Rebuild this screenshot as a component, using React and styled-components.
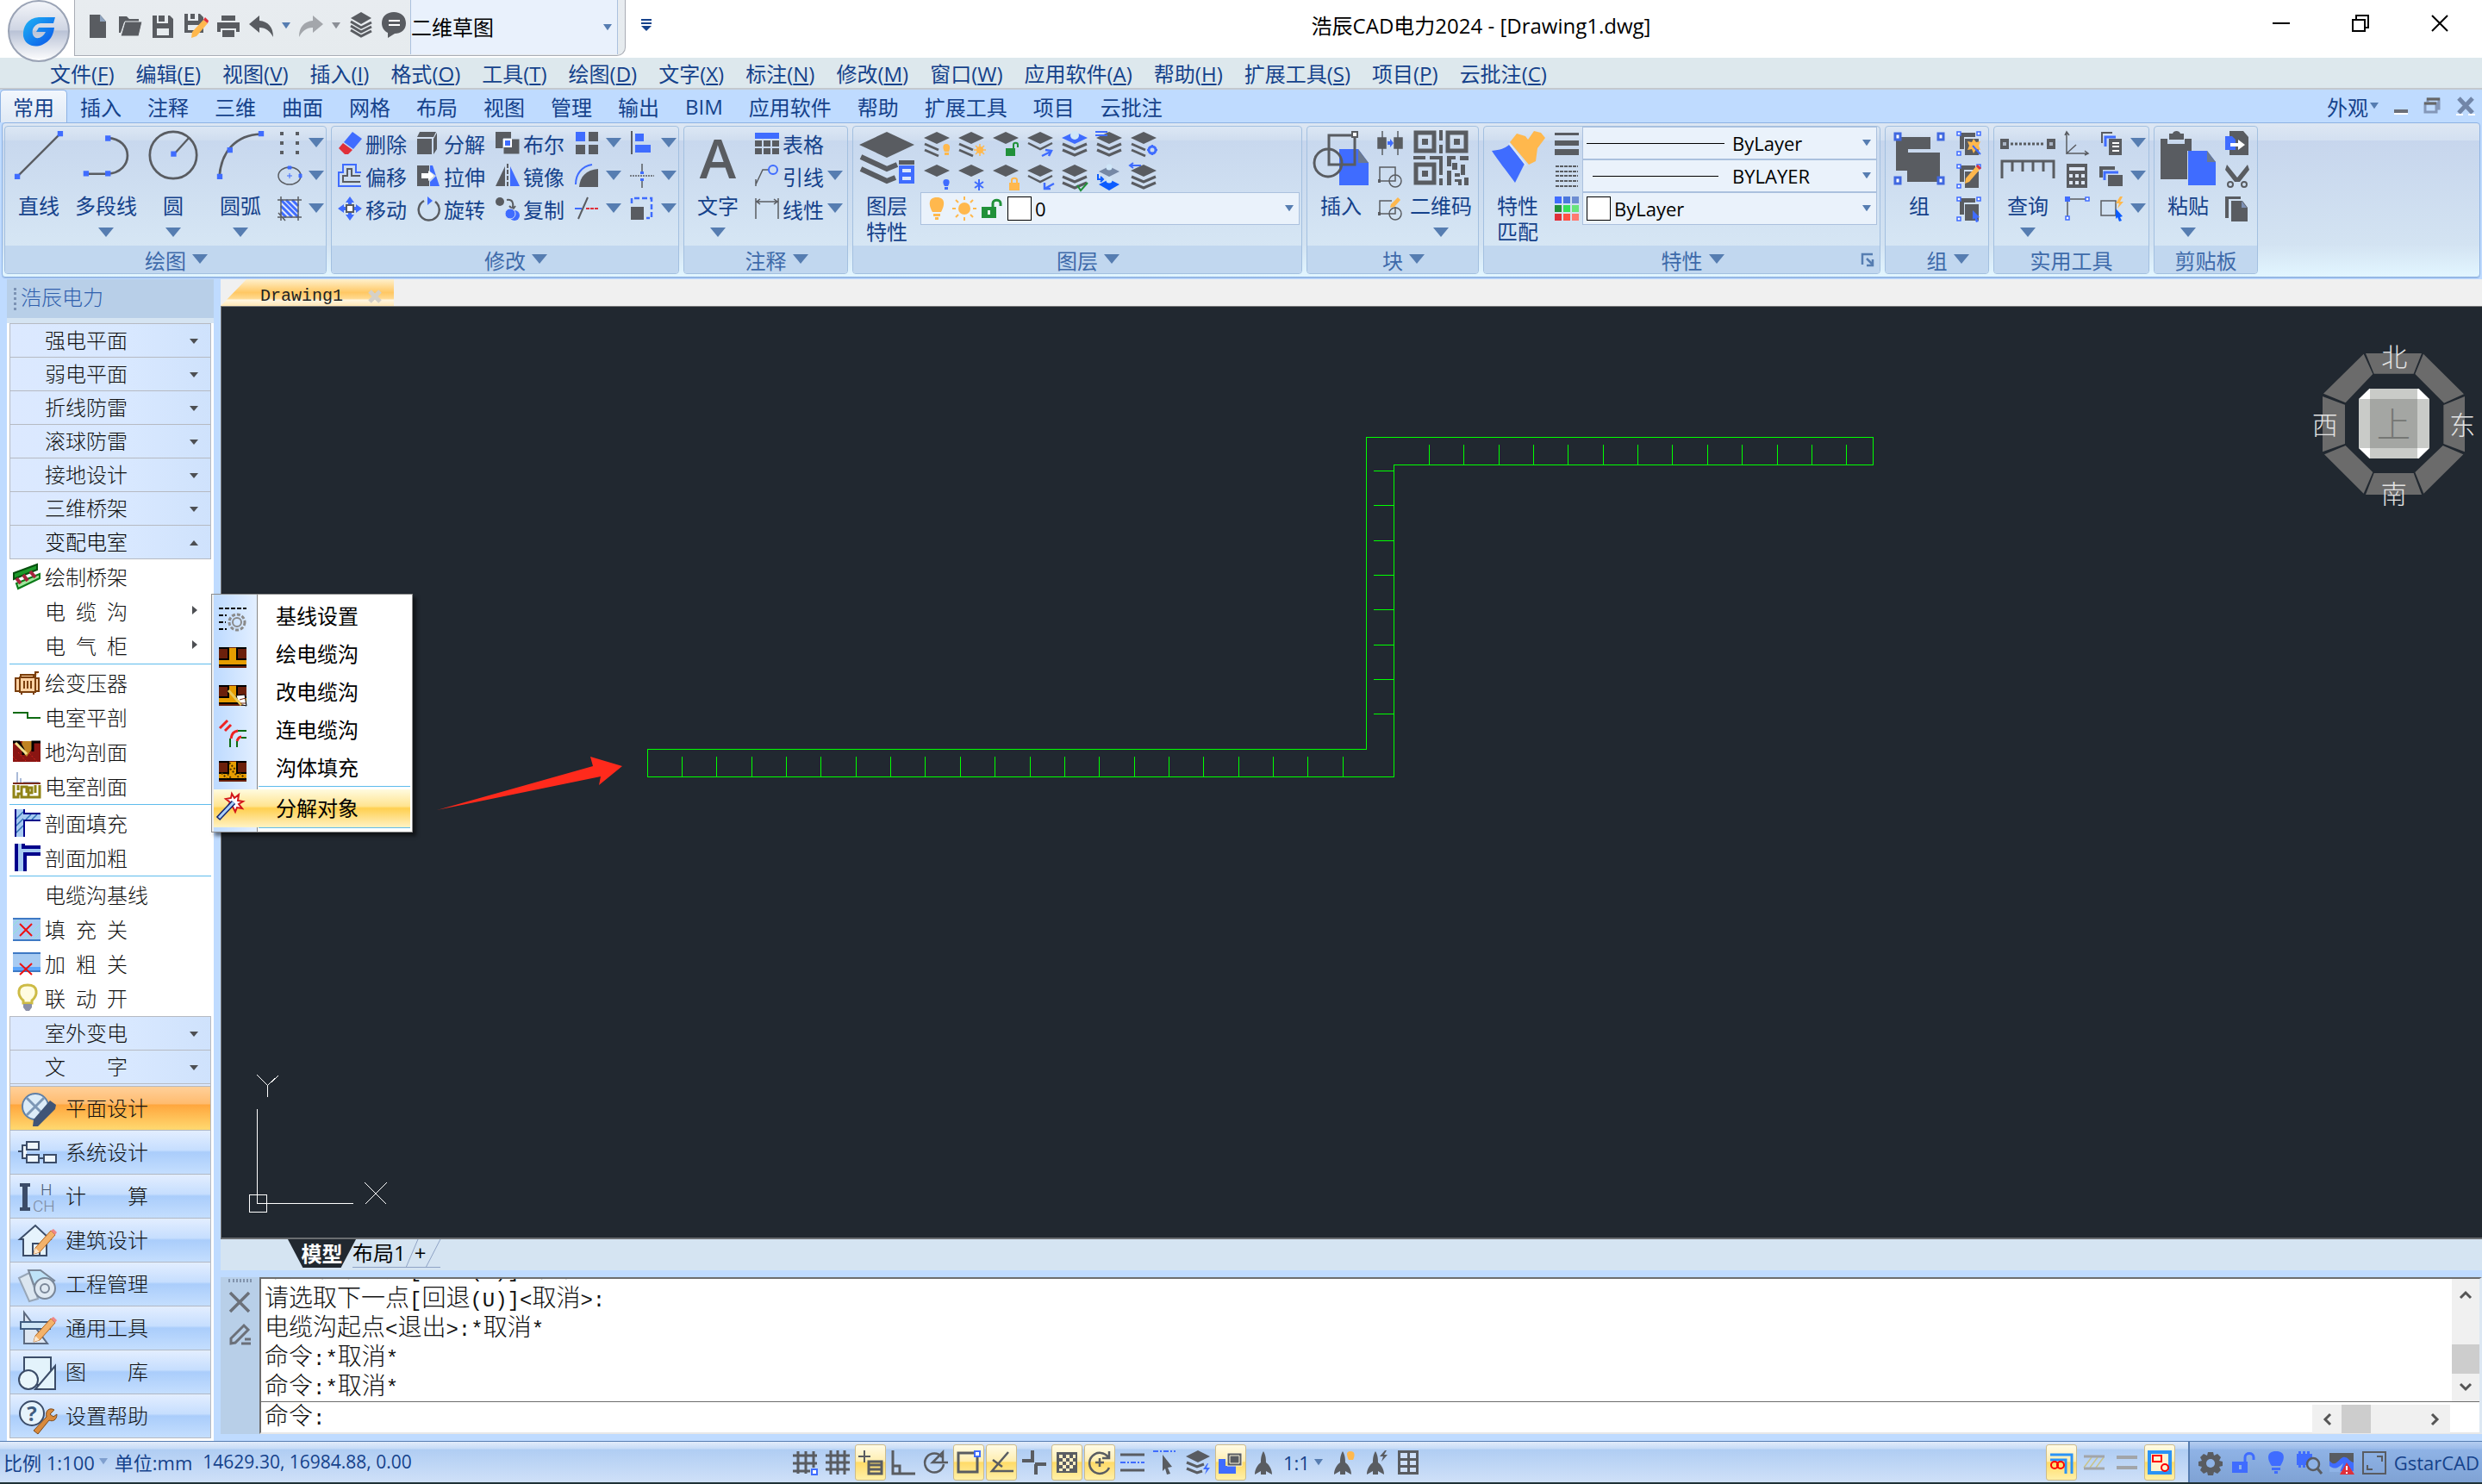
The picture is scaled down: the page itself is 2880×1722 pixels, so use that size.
import React, { useState } from 'react'
import styled, { createGlobalStyle, css } from 'styled-components'

const G = '#595c61'
const B = '#3f6cff'
const O = '#ffb84d'
const R = '#e0303a'
const GR = '#21913a'
const UI = '"Open Sans", "Noto Sans CJK SC", sans-serif'
const SONG = '"Liberation Mono", "Noto Sans CJK SC", monospace'

const GlobalStyle = createGlobalStyle`
  * { box-sizing: border-box; }
  body { margin: 0; background: #bfdbff; font-family: ${UI}; font-size: 24px; color: #15428b; }
  button, select, input { font: inherit; color: inherit; border: 0; background: none; padding: 0; margin: 0; }
  a { color: inherit; text-decoration: none; }
  svg { display: block; flex: none; overflow: visible; }
`

/* ---------- icons ---------- */

const stack = (color = G) => (
  <>
    <path d="M16 1 31 8 16 15 1 8Z" fill={color} />
    <path d="M2 15 16 21 30 15M2 22 16 28 30 22" fill="none" stroke={G} strokeWidth="3" />
  </>
)
const halfStack = (
  <>
    <path d="M16 1 31 8 16 15 1 8Z" fill={G} />
    <path d="M2 15 18 22M2 22 18 29" fill="none" stroke={G} strokeWidth="3" />
  </>
)
const diamond = <path d="M16 1 31 8 16 15 1 8Z" fill={G} />
const squares = (
  <>
    <path d="M4 2h18v5H9v14H4zM10 9h16v19H10z" fill={G} />
    <path d="M1 1h4v4H1zM24 1h4v4h-4zM1 24h4v4H1z" fill="#fff" stroke={B} strokeWidth="1.5" />
  </>
)
const trench = (
  <>
    <path d="M0 4h32v24H0z" fill="#6b200b" />
    <path d="M11 5h10v13h11v6H0v-6h11z" fill="#e69d00" />
    <path d="M0 5h11v13H0M32 5H21v13h11M0 25h32" fill="none" stroke="#000" strokeWidth="2" />
  </>
)
const pencil = (
  <>
    <path d="M11 17 23 3l4 4-12 14-5 2z" fill={O} />
    <path d="m23 3 2-2 4 4-2 2z" fill={R} />
  </>
)
const navPencil = (
  <>
    <path d="M20 28 38 8l5 5-18 20-7 2z" fill="#f3b26a" stroke="#b5651d" strokeWidth="1" />
    <path d="m38 8 3-2 4 4-2 3z" fill="#e88" />
    <path d="m18 35 2-7 5 5z" fill="#fbe6cc" />
  </>
)
const scaleFig = <path d="M14 1c3 5 3 10 3 13 4 3 7 8 7 14l-7-4v4h-6v-4l-7 4c0-6 3-11 7-14 0-3 0-8 3-13z" fill={G} />

const icons = {
  /* quick access */
  newFile: <><path d="M5 1h12l7 8v19H5z" fill={G} /><path d="M17 1v8h7z" fill="#8fa3bd" /></>,
  open: <><path d="M1 3h9l3 3h11v4H7L3 22H1z" fill={G} /><path d="M8 9h20l-4 17H3z" fill={G} stroke="#e8ecf0" /></>,
  save: <path d="M2 2h5v9h13V2h2l4 4v22H2zM9 2h7v7H9zM7 17v8h14v-8z" fillRule="evenodd" fill={G} />,
  saveAs: <><path d="M1 0h4v8h12V0h2l4 4v18H1zM8 0h5v6H8zM5 13v6h14v-6z" fillRule="evenodd" fill={G} /><path d="M10 21 23 7l5 4-13 15-6 2z" fill={O} /><path d="m23 7 2-3 4 4-1 3z" fill={R} /></>,
  print: <path d="M6 2h16v6H6zM1 10h26v11h-4v-4H5v4H1zM7 19h14v8H7z" fill={G} />,
  undo: <path d="M12 2 0 12l12 10v-6c8 0 12 4 16 11 0-12-6-18-16-19z" fill={G} />,
  redo: <path d="m16 2 12 10-12 10v-6C8 16 4 20 0 27 0 15 6 9 16 8z" fill="#a3a6ab" />,
  comment: <><path d="M14 0c8 0 14 5 14 13s-6 12-13 12L7 30v-6C3 22 0 18 0 13 0 5 6 0 14 0z" fill={G} /><path d="M8 10h13M8 15h13" stroke="#fff" strokeWidth="2" /></>,
  books: <><path d="M14 0 26 7 14 14 2 7z" fill={G} /><path d="m2 11 12 7 12-6M2 16l12 7 12-6M2 21l12 7 12-6" stroke={G} strokeWidth="3" fill="none" /></>,
  /* draw */
  line: <><path d="M4 60 60 4" stroke={G} strokeWidth="2.5" /><path d="M1 56h7v7H1zM56 1h7v7h-7z" fill={B} /></>,
  polyline: <><path d="M6 56h28c34-2 34-45 0-46" fill="none" stroke={G} strokeWidth="3" /><path d="M3 52h7v7H3zM31 52h7v7h-7zM31 7h7v7h-7z" fill={B} /></>,
  circle: <><circle cx="32" cy="32" r="30" fill="none" stroke={G} strokeWidth="3" /><path d="M32 32 52 10" stroke={G} strokeWidth="2.5" /><path d="M29 27h7v7h-7z" fill={B} /></>,
  arc: <><path d="M5 60C7 28 26 6 58 5" fill="none" stroke={G} strokeWidth="3" /><path d="M2 56h7v7H2zM15 22h7v7h-7zM55 1h7v7h-7z" fill={B} /></>,
  points: <path d="M3 1h4v4H3zM21 1h4v4h-4zM3 12h4v4H3zM21 12h4v4h-4zM3 23h4v4H3zM21 23h4v4h-4z" fill={G} />,
  ellipse: <><ellipse cx="14" cy="14" rx="13" ry="10" fill="none" stroke={G} strokeWidth="1.5" /><path d="M12 3h4v3h-4zM25 12h3v4h-3zM11 14h6M14 11v6" fill={B} stroke={B} /></>,
  hatch: <><path d="M4 4h20v20H4z" fill="#dfe8fb" /><path d="m4 4 20 20M10 4l14 14M17 4l7 7M4 11l13 13M4 18l6 6" stroke={B} strokeWidth="3" /><path d="M0 4h28M4 0v28M0 24h28M24 0v28M1 19l8 9" stroke={G} strokeWidth="1.5" fill="none" /></>,
  /* modify */
  erase: <><path d="M17 1 28 9 18 21 7 13z" fill={B} /><path d="m6 14 11 8-5 5H8l-7-7z" fill={R} /></>,
  offset: <><path d="M27 26H1V10h5V1h15v9h6" fill="none" stroke={B} strokeWidth="2" /><path d="M26 21H6v-7h5V6h5v8h10" fill="none" stroke={G} strokeWidth="2" /></>,
  move: <><path d="m14 0 5 7h-3v5h5V9l7 5-7 5v-3h-5v5h3l-5 7-5-7h3v-5H7v3l-7-5 7-5v3h5V7H9z" fill={B} /><path d="M10 10h8v8h-8z" fill="#fff" stroke={G} strokeWidth="2" /></>,
  explode: <path d="M1 9h17v18H1zM4 1h19l-3 6H1zM20 9l4-7v19l-4 6z" fill={G} />,
  stretch: <><path d="M1 2h14v8l6 4-6 5v7H1z" fill={G} /><path d="M16 2h3l8 24H16v-5l7-7-7-5z" fill={B} /><path d="M6 11h8V8l7 6-7 6v-3H6z" fill="#fff" /></>,
  rotate: <><path d="M9 5A12 12 0 1 0 22 6" fill="none" stroke={G} strokeWidth="2.5" /><path d="m13 0 6 5-6 5z" fill={B} /></>,
  boolean: <><path d="M0 1h18v19H0z" fill={G} /><path d="M9 9h19v18H9z" fill={G} stroke="#cddcf0" /><path d="M10 10h8v8h-8z" fill={B} stroke="#fff" strokeWidth="2" /></>,
  mirror: <><path d="M11 3v23H0z" fill={G} /><path d="M14 0v28" stroke={G} strokeWidth="2" strokeDasharray="5 2" /><path d="M17 3v23h11z" fill={B} /></>,
  copy: <><circle cx="5" cy="6" r="5" fill={G} /><path d="M13 4c7-1 8 4 7 9M16 11l4 4 3-4" fill="none" stroke={G} strokeWidth="2" /><circle cx="22" cy="22" r="6" fill={B} /><circle cx="17" cy="20" r="6" fill={B} stroke="#d4e0f3" /></>,
  array: <><path d="M1 1h11v11H1z" fill={B} /><path d="M16 1h11v11H16zM1 16h11v11H1zM16 16h11v11H16z" fill={G} /></>,
  fillet: <><path d="M1 24C1 12 8 3 20 1" fill="none" stroke={B} strokeWidth="2" /><path d="M5 27C6 15 13 7 27 6v21z" fill={G} /></>,
  trim: <><path d="M0 14h8" stroke={B} strokeWidth="2" /><path d="M4 26 15 1" stroke={G} strokeWidth="2" /><path d="M13 14h15" stroke={R} strokeWidth="2" strokeDasharray="4 1" /></>,
  align: <><path d="M2 0v27" stroke={G} strokeWidth="2" /><path d="M6 3h10v9H6zM6 16h18v9H6z" fill={B} /></>,
  breakAt: <><path d="M14 0v10M14 18v10" stroke={G} strokeWidth="1.5" /><path d="M0 14h28" stroke={G} strokeWidth="1.5" strokeDasharray="2 1" /><path d="M12 9h4v3h-4zM12 17h4v3h-4z" fill={B} /></>,
  scale: <><path d="M1 12h15v15H1z" fill={G} /><path d="M2 8V2h23v23h-6" fill="none" stroke={B} strokeWidth="2.5" strokeDasharray="6 3" /></>,
  /* annotate */
  letter: <text x="32" y="56" textAnchor="middle" fontFamily="Open Sans" fontWeight="600" fontSize="64" fill={G}>A</text>,
  table: <><path d="M0 2h28v7H0z" fill={B} /><path d="M0 11h8v7H0zM10 11h8v7h-8zM20 11h8v7h-8zM0 20h8v7H0zM10 20h8v7h-8zM20 20h8v7h-8z" fill={G} /></>,
  leader: <><path d="m1 24 8-17h6M1 18v8" fill="none" stroke={G} strokeWidth="1.5" /><circle cx="21" cy="7" r="5" fill="none" stroke={B} strokeWidth="2" /></>,
  linear: <path d="M1 2v24M27 2v24M2 6h24M6 3 2 6l4 3M22 3l4 3-4 3" fill="none" stroke={G} strokeWidth="1.5" />,
  /* layers */
  layerBig: <><path d="M32 2 64 17 32 32 0 17z" fill={G} /><path d="M2 31 32 45 44 40M2 45 32 59 42 55" fill="none" stroke={G} strokeWidth="6" /><path d="M46 35h18v5H46z" fill={G} /><path d="M46 41h18v21H46z" fill={B} /><path d="M50 45h10v4H50zM50 54h10v4H50z" fill="#dce7fa" /></>,
  layBulb: <>{halfStack}<path d="M27 15c6 0 4 7 3 9h-5c-2-3-3-9 2-9zM25 25h5v3h-5z" fill={O} /></>,
  laySun: <>{halfStack}<circle cx="26" cy="22" r="4" fill={O} /><path d="M26 15v14M19 22h14M21 17l10 10M31 17 21 27" stroke={O} strokeWidth="1.5" /></>,
  layUnlock: <>{diamond}<path d="M16 20h11v9H16z" fill={GR} /><path d="M25 20v-4c0-3 5-3 5 0v3" fill="none" stroke={GR} strokeWidth="2" /></>,
  layNext: <><path d="M16 1 31 8 16 15 1 8Z" fill={G} /><path d="m2 14 14 7 14-7" fill="none" stroke={G} strokeWidth="2.5" /><path d="m18 29 10-5M22 22l7 1-3 6" fill="none" stroke={B} strokeWidth="2.5" /></>,
  layTop: <>{stack(B)}<circle cx="16" cy="5" r="5" fill="#cfe6f8" /></>,
  layList: <>{stack()}<path d="M0 1h14M0 5h14" stroke={B} strokeWidth="2" /></>,
  layGear: <>{halfStack}<circle cx="26" cy="22" r="4" fill="none" stroke={B} strokeWidth="3" /><path d="M26 16v3M26 25v3M20 22h3M29 22h3" stroke={B} strokeWidth="2" /></>,
  layOff: <>{diamond}<path d="M27 18c5 0 4 5 2 8h-4c-2-3-3-8 2-8zM25 27h4v3h-4z" fill={B} /></>,
  layFreeze: <>{diamond}<path d="M25 18v13M20 21l10 7M30 21l-10 7" stroke={B} strokeWidth="2" /></>,
  layLock: <>{diamond}<path d="M20 22h12v9H20z" fill={O} /><path d="M23 22v-3c0-3 6-3 6 0v3" fill="none" stroke={O} strokeWidth="2" /></>,
  layPrev: <><path d="M16 1 31 8 16 15 1 8Z" fill={G} /><path d="m2 14 14 7 14-7" fill="none" stroke={G} strokeWidth="2.5" /><path d="m32 23-11 6M21 22v7h7" fill="none" stroke={B} strokeWidth="2.5" /></>,
  layMatch: <>{stack()}<path d="m19 25 4 6 8-9" fill="none" stroke={GR} strokeWidth="2" /></>,
  layWalk: <><path d="m16 3 12 6-12 6L4 9z" fill="#7688a5" /><circle cx="16" cy="4" r="3.5" fill="#cfe6f8" /><path d="m16 18 12 6-12 7-12-7z" fill="#0c5cff" /><circle cx="16" cy="19" r="3.5" fill="#cfe6f8" /><path d="M3 12v6h6M6 15l3 3-3 3" fill="none" stroke="#0c5cff" strokeWidth="2" /></>,
  layBack: <>{stack()}<path d="M0 2h13M4-1 0 2l4 3" stroke={B} strokeWidth="2" fill="none" /></>,
  bulb: <path d="M14 1c11 0 9 10 5 17H9C5 11 3 1 14 1zM10 20h8v3h-8zM12 24h4v3h-4z" fill={O} />,
  sun: <><circle cx="14" cy="14" r="7" fill={O} /><path d="M14 0v4M14 24v4M0 14h4M24 14h4M4 4l3 3M21 21l3 3M24 4l-3 3M7 21l-3 3" stroke={O} strokeWidth="2" /></>,
  unlock: <><path d="M2 12h17v13H2z" fill={GR} /><path d="M15 12V8c0-5 9-5 9 0v3" fill="none" stroke={GR} strokeWidth="3" /><path d="M9 16h3v5H9z" fill="#eef5fb" /></>,
  /* block */
  insertBlock: <><path d="M30 22h22l12 16v26H30z" fill={B} /><path d="M52 22v16h12z" fill="#6c7a90" /><path d="M18 6h30v34H18z" fill="none" stroke={G} strokeWidth="3" /><circle cx="17" cy="38" r="16" fill="none" stroke={G} strokeWidth="3" /><path d="M45 2h6v6h-6z" fill="#fff" stroke={G} strokeWidth="2" /></>,
  attach: <><path d="M0 8h9v12H0zM19 8h9v12h-9zM5 0v28M23 0v28" fill={G} stroke={G} strokeWidth="1.5" /><path d="M11 12h3V9l4 5-4 5v-3h-3z" fill={B} /></>,
  block: <><path d="M2 4h18v16H2z" fill="none" stroke={G} strokeWidth="1.5" /><circle cx="20" cy="20" r="7" fill="none" stroke={G} strokeWidth="1.5" /><path d="M0 18h3v4H0z" fill={G} /></>,
  blockEdit: <><path d="M20 12v8H2V5h14" fill="none" stroke={G} strokeWidth="1.5" /><circle cx="20" cy="20" r="7" fill="none" stroke={G} strokeWidth="1.5" /><path d="M0 18h3v4H0z" fill={G} /><path d="m15 9 8-8 3 3-7 8-5 1z" fill={O} /></>,
  qr: <><path d="M3 3h21v21H3zM40 3h21v21H40zM3 40h21v21H3z" fill="none" stroke={G} strokeWidth="5" /><path d="M10 10h7v7h-7zM47 10h7v7h-7zM10 47h7v7h-7zM30 0h4v12h-4zM30 17h4v10h-4zM0 30h14v4H0zM19 30h15v22h-4V34H19zM30 56h4v8h-4zM39 30h10v4h-5v8h-5zM54 30h10v5H54zM45 38h6v8h-6zM55 40h5v12h-5zM39 47h5v17h-5zM48 50h6v4h-6zM48 57h8v7h-4v-4h-4zM59 55h5v9h-5z" fill={G} /></>,
  /* properties */
  matchBig: <><path d="M2 24c10-1 15-3 20-7l18 22-11 22C18 46 10 36 2 24z" fill={B} /><path d="m23 14 8-10 10 3 3 4 7-10 8 2 5 6-9 12-2 15-8 4z" fill={O} /><path d="m22 15 20 26" stroke="#dce7f7" strokeWidth="2" /></>,
  lineWeight: <path d="M0 2h28v3H0zM0 11h28v6H0zM0 21h28v7H0z" fill={G} />,
  lineType: <path d="M1 3h26M1 9h26M1 14h26M1 20h26M1 26h26" stroke={G} strokeWidth="2" strokeDasharray="4 1" />,
  palette: <><path d="M0 0h8v8H0z" fill={B} /><path d="M10 0h8v8h-8z" fill="#4a77dd" /><path d="M20 0h8v8h-8z" fill="#6d8dd2" /><path d="M0 10h8v8H0z" fill={GR} /><path d="M10 10h8v8h-8z" fill="#35e05a" /><path d="M20 10h8v8h-8z" fill="#68e47c" /><path d="M0 20h8v8H0z" fill={R} /><path d="M10 20h8v8h-8z" fill="#ff5144" /><path d="M20 20h8v8h-8z" fill="#ff7a70" /></>,
  launcher: <path d="M2 14V2h12M7 7l7 7M14 8v7H7" fill="none" stroke="#567db1" strokeWidth="2.5" />,
  /* group */
  groupBig: <><path d="M5 8h40v14H19v25H5zM18 26h38v34H18z" fill={G} /><path d="M4 4h6v7H4zM54 4h6v7h-6zM4 55h6v7H4zM54 55h6v7h-6z" fill="#fff" stroke="#4068e0" strokeWidth="3" /></>,
  ungroup: <>{squares}<path d="m20 9 3 4 5-1-2 5 2 5-5-1-3 5-2-5-5 1 2-5-2-5 5 1z" fill={O} /><path d="m19 17 9 10" stroke={B} strokeWidth="2" /></>,
  groupEdit: <>{squares}{pencil}</>,
  groupPick: <>{squares}<path d="m19 16 8 8-3 1 2 4-3 1-2-5-2 2z" fill={B} /></>,
  /* utilities */
  measure: <><path d="M0 10h10v12H0zM54 10h10v12H54z" fill={G} /><path d="M3 14h4v4H3zM57 14h4v4h-4z" fill="#aab4c4" /><path d="M12 16h40" stroke={G} strokeWidth="3" strokeDasharray="3 2" /><path d="M2 56V36h60v20M14 36v12M26 36v12M38 36v12M50 36v12" fill="none" stroke={G} strokeWidth="3" /></>,
  axes: <path d="M2 27V2M2 26h24M2 26l11-10M0 5l2-4 3 4M23 23l4 3-4 2" fill="none" stroke={G} strokeWidth="1.5" />,
  calc: <><path d="M2 0h24v28H2z" fill={G} /><path d="M5 4h18v4H5zM5 12h4v4H5zM12 12h4v4h-4zM19 12h4v4h-4zM5 20h4v4H5zM12 20h4v4h-4zM19 20h4v4h-4z" fill="#dfe8f5" /></>,
  dist: <><path d="M2 3h23M3 3v23" stroke={G} strokeWidth="1.5" /><path d="M0 0h6v6H0z" fill={B} /><path d="M24 1h4v4h-4zM1 23h4v4H1z" fill="#fff" stroke={B} strokeWidth="1.5" /></>,
  docs: <><path d="M3 14V2h12" fill="none" stroke={G} strokeWidth="2" /><path d="M7 18V7h12" fill="none" stroke={B} strokeWidth="3" /><path d="M11 9h15v19H11z" fill={G} /><path d="M15 14h8M15 18h8M15 23h8" stroke="#fff" strokeWidth="2" /></>,
  windows: <><path d="M2 16V5h16" fill="none" stroke={G} strokeWidth="4" /><path d="M6 19v-9h16" fill="none" stroke={B} strokeWidth="3" /><path d="M10 13h17v13H10z" fill={G} /></>,
  quickPick: <><path d="M2 5h17v17H2z" fill="none" stroke={G} strokeWidth="1.5" /><path d="m24 0-5 8h4l-2 6 7-8h-4l3-6z" fill={O} /><path d="m19 14 8 9-3 1 2 4-3 1-2-5-2 2z" fill="#0c5cff" /></>,
  /* clipboard */
  pasteBig: <><path d="M0 10h8v6h20v-6h8v14h-5v33H0z" fill={G} /><path d="M10 4h4c1-4 8-4 9 0h4v7H10z" fill={G} /><path d="M32 24h22l10 13v27H32z" fill={B} /><path d="M54 24v13h10z" fill="#6c7a90" /></>,
  docArrow: <><path d="M5 0h16l6 7v21H5z" fill={G} /><path d="M0 6h8l4 4v12H0z" fill={B} /><path d="M6 14h9v-4l8 6-8 6v-4H6z" fill="#fff" /></>,
  cut: <><path d="m2 1 12 15L26 1l2 6-11 14h-6L0 7z" fill={G} /><circle cx="6" cy="24" r="3" fill="none" stroke={G} strokeWidth="2" /><circle cx="22" cy="24" r="3" fill="none" stroke={G} strokeWidth="2" /></>,
  copyDoc: <><path d="M0 0h18v3H4v22H0z" fill={G} /><path d="M7 5h13l6 8v16H7z" fill={G} /><path d="M19 5v8h6z" fill="#7d90b5" /></>,
  /* sidebar */
  tray: <><path d="m1 12 27-10v6L1 19z" fill="#1d9a2a" stroke="#064f0d" strokeWidth="2" /><path d="m4 24 27-11v5L6 30z" fill="#9ee89b" stroke="#0a7a18" strokeWidth="2" /><path d="m4 18 5 6M12 14l5 7M20 10l6 7" stroke="#a4253c" strokeWidth="4" /></>,
  transformer: <><path d="M8 10h18v17H8zM3 11h5v15H3zM26 11h4v15h-4zM9 10V7h15v3M26 10V4h4M10 30v-3M24 30v-3" fill="#ffd3a5" stroke="#7a3f0d" strokeWidth="2" /><path d="M13 14v9M17 14v9M21 14v9" stroke="#7a3f0d" strokeWidth="2" /></>,
  section: <path d="M0 11h17v6h15" fill="none" stroke="#0d6b12" strokeWidth="2" />,
  trenchCut: <><path d="M0 4h32v24H0z" fill="#8a1512" /><path d="M11 4h12l-1 9-6 9-7-8z" fill="#c08322" /><path d="M0 5h7l5 9v6M32 5h-9v11" fill="none" stroke="#000" strokeWidth="3" /><path d="m3 6 13 13" stroke="#f4e190" strokeWidth="3" /><path d="m0 22 6 6M6 17l9 10M19 18l9 10" stroke="#d8251c" strokeWidth="1" strokeDasharray="2" /></>,
  roomCut: <><path d="M5 0v12M9 7v5M12 12h18" stroke="#a9bad8" strokeWidth="2" /><path d="M0 13h32" stroke="#7a2a1a" strokeWidth="2" /><path d="M1 15v14h5v-4h4v4h8V18h4v6h-4v5h13V15M6 15v6M10 24v-7h6v7M26 15v9" fill="none" stroke="#908315" strokeWidth="3" /></>,
  hatchFill: <><path d="M2 0h11v32H2zM13 5h19v8H13z" fill="#a7cbf2" /><path d="M3 12 12 3M3 20l9-9M3 28l9-9M15 12l6-6M22 12l6-6" stroke="#2f72b5" strokeWidth="1.5" /><path d="M3 0v32M13 0v5h19M13 32V13h19" fill="none" stroke="#00008b" strokeWidth="2" /></>,
  bold: <><path d="M6 0h6v32H6zM12 6h20v5H12z" fill="#a7cbf2" /><path d="M4 0v32M12 0v4h20M14 32V12h18" fill="none" stroke="#00008b" strokeWidth="4" /></>,
  fillOff: <><path d="M0 4h32v25H0z" fill="#a7cbf2" /><path d="M0 22 16 6M0 12l7-7M14 28 31 11M24 28l8-8" stroke="#8fe8cf" /><path d="M0 4h32M0 29h32" stroke="#3e79c4" strokeWidth="2" /><path d="m8 10 14 14M22 10 8 24" stroke="#e11" strokeWidth="2" /></>,
  boldOff: <><path d="M0 4h32v16H0z" fill="#a7cbf2" /><path d="M0 20h32v5H0z" fill="#5ba5fb" /><path d="M0 4h32M0 25h32" stroke="#3e79c4" strokeWidth="2" /><path d="m8 16 14 13M22 16 8 29" stroke="#e11" strokeWidth="2" /></>,
  lamp: <><path d="M17 1c13 0 12 12 5 18v3H12v-3C5 13 4 1 17 1z" fill="#fffce0" stroke="#cdbb45" strokeWidth="3" /><path d="M12 23h10v4l-3 4h-4l-3-4z" fill="#8b90a8" /></>,
  /* popup */
  baseline: <><path d="M0 3h32M0 11h9M0 19h8M0 27h9" stroke="#000" strokeWidth="2" strokeDasharray="5 2" /><circle cx="21" cy="19" r="9" fill="none" stroke="#8a8a8a" strokeWidth="3" strokeDasharray="4 2" /><circle cx="21" cy="19" r="5" fill="none" stroke="#8a8a8a" strokeWidth="2" /></>,
  trench,
  trenchEdit: <>{trench}<path d="m20 16 10-1 2 13-9-2z" fill="#fff" stroke="#000" /><path d="m11 10 15 17" stroke="#e8c95a" strokeWidth="3" /><path d="m24 21 7-2M25 25h6" stroke="#6b200b" /></>,
  trenchJoin: <><path d="m1 10 9-9M7 13l7-7M14 22c1-6 3-8 8-9M21 25c1-3 3-5 5-5" fill="none" stroke="#e22" strokeWidth="3" /><path d="M22 13h10M26 21h6M13 22v10M21 25v7" stroke="#0d6b12" strokeWidth="2" /></>,
  trenchFill: <>{trench}<path d="m12 6 8 9M13 13l10 10M3 18l6 6M10 19l4 5M24 18l6 6" stroke="#4d3405" strokeWidth="2" strokeDasharray="2" /></>,
  wand: <><path d="m18 1 3 5 5-4-1 7 6 1-5 3 4 5-6-1-2 5-3-6-6 1 3-6-5-4 6-1z" fill="#fff" stroke="#d3171a" strokeWidth="2" /><path d="M2 30 20 11" stroke="#13236f" strokeWidth="6" /><path d="M3 29 20 11" stroke="#a9d0f8" strokeWidth="3" /></>,
  /* command pane */
  close: <path d="m2 3 22 22M24 3 2 25" stroke="#6b7079" strokeWidth="3.5" />,
  edit: <path d="M3 25v-6L18 4l5 5L8 24zM15 25h11M19 20h7" fill="none" stroke="#6b7079" strokeWidth="3" />,
  /* status bar */
  snap: <><path d="M6 1v26M15 1v26M24 1v19M0 6h28M0 15h28M0 24h20" stroke={G} strokeWidth="3" /><path d="M22 22h6v6h-6z" fill="#fff" stroke={B} strokeWidth="2" /></>,
  grid: <path d="M6 0v28M14 0v28M22 0v28M0 6h28M0 14h28M0 22h28" stroke={G} strokeWidth="3" />,
  dyn: <><path d="M0 7h14M7 0v14" stroke={G} strokeWidth="2" /><path d="M12 13h15v14H12zM12 17h15M12 22h15" fill="none" stroke={G} strokeWidth="3" /></>,
  ortho: <path d="M2 0v27h26M2 18h8v9" fill="none" stroke={G} strokeWidth="3" />,
  polar: <path d="M21 8a11 11 0 1 0 2 8M28 14H10L22 2v12" fill="none" stroke={G} strokeWidth="2.5" />,
  osnap: <><path d="M2 3h22v22H2z" fill="none" stroke={G} strokeWidth="3" /><path d="M21 1h6v6h-6z" fill="#fff" stroke={B} strokeWidth="2" /></>,
  otrack: <path d="M22 2 3 24h25M4 11l11 8" fill="none" stroke={G} strokeWidth="2.5" />,
  lwt: <path d="M0 12h12M12 0v14M15 16h13M16 16v12" fill="none" stroke={G} strokeWidth="4" />,
  transp: <><path d="M2 2h24v24H2z" fill={G} /><path d="M5 5h4v4H5zM13 5h4v4h-4zM21 5h3v4h-3zM9 9h4v4H9zM17 9h4v4h-4zM5 13h4v4H5zM13 13h4v4h-4zM21 13h3v4h-3zM9 17h4v4H9zM17 17h4v4h-4zM5 21h4v3H5zM13 21h4v3h-4z" fill="#ffeec2" /></>,
  cycle: <path d="M24 8A12 12 0 1 0 25 20M25 1v8h-8M9 14h10M14 9v10" fill="none" stroke={G} strokeWidth="2.5" />,
  lines: <><path d="M0 5h28M0 23h28" stroke={G} strokeWidth="3" /><path d="M0 14h28" stroke={B} strokeWidth="2" strokeDasharray="6 2 2 2" /></>,
  pick: <><path d="M0 1h26" stroke={B} strokeWidth="2" strokeDasharray="6 2 2 2" /><path d="m11 5 11 14-5 1 3 7-4 1-2-7-3 3z" fill={G} /></>,
  layFast: <><path d="m14 0 14 7-14 7L0 7z" fill={G} /><path d="m1 14 12 5 8-3M1 21l12 5 6-2" fill="none" stroke={G} strokeWidth="3" /><path d="m25 15-5 7h4l-2 6 6-8h-4l2-5z" fill={B} /></>,
  order: <><path d="M0 10h8v8h12v9H0z" fill={B} /><path d="M10 3h17v15H10z" fill={G} stroke="#fff7dc" /><path d="M13 6h11v9H13z" fill={G} stroke="#fff7dc" /></>,
  scaleFig,
  scaleBulb: <>{scaleFig}<path d="M23 1c6 0 5 6 3 10h-5c-2-4-4-10 2-10z" fill={O} /></>,
  scaleAuto: <>{scaleFig}<path d="m25 0-6 7h4l-2 6 7-8h-4l3-5z" fill={G} /></>,
  cells: <><path d="M2 0h24v28H2z" fill={G} /><path d="M5 3h8v6H5zM16 3h7v6h-7zM5 12h8v5H5zM16 12h7v5h-7zM5 20h8v5H5zM16 20h7v5h-7z" fill="#cfe0f8" /></>,
  ductOn: <><path d="M1 5h25v22M1 11h18v16" fill="none" stroke="#2b93f5" strokeWidth="3" /><circle cx="6" cy="17" r="4" fill="none" stroke="red" strokeWidth="2" /><circle cx="13" cy="17" r="4" fill="none" stroke="red" strokeWidth="2" /></>,
  ductHatch: <><path d="m2 20 9-12M9 20l9-12M16 20l9-12" stroke="#c9c48a" strokeWidth="1.5" /><path d="M2 7h24M2 21h24" stroke="#a2a5a9" strokeWidth="3" /></>,
  ductPlain: <path d="M2 8h24M2 20h24" stroke="#a2a5a9" strokeWidth="4" />,
  frame: <><path d="M2 2h24v24H2z" fill="#fff3cf" stroke="#2b93f5" strokeWidth="4" /><path d="M6 6h10v7H6z" fill="none" stroke="red" strokeWidth="2" /><circle cx="20" cy="20" r="4" fill="none" stroke="red" strokeWidth="2" /></>,
  gear: <><path d="M11 2h6l1 4 4-2 4 4-2 4 4 1v5l-4 1 2 4-4 4-4-2-1 4h-6l-1-4-4 2-4-4 2-4-4-1v-5l4-1-2-4 4-4 4 2z" fill={G} /><circle cx="14" cy="15" r="5" fill="#8fb3e6" /></>,
  lockBlue: <><path d="M1 13h18v13H1z" fill={B} /><path d="M16 13V8c0-6 10-6 10 0v3" fill="none" stroke={B} strokeWidth="3" /><path d="M9 17h3v5H9z" fill="#8fb3e6" /></>,
  bulbBlue: <path d="M14 1c12 0 10 10 5 17H9C4 11 2 1 14 1zM9 20h10v3H9zM12 24h4v3h-4z" fill={B} />,
  chip: <><path d="M0 4h18v13H0zM2 1h3v19H2zM7 1h3v19H7zM12 1h3v19h-3z" fill={B} /><circle cx="19" cy="16" r="7" fill="#8fb3e6" stroke={G} strokeWidth="2.5" /><path d="m24 21 5 6" stroke={G} strokeWidth="3" /></>,
  alert: <><path d="M0 3h28v15H0z" fill={G} /><path d="M0 12c8 10 12-6 18-4 4 0 5 5 10 6v10H0z" fill={B} /><path d="M0 18c8 6 12 0 16-3l-4 10H0z" fill="#8fb3e6" /><path d="m20 14 9 14H12z" fill={R} /><path d="M20 18v5M20 25v2" stroke="#fff" strokeWidth="2" /></>,
  expand: <path d="M1 2h26v25H1zM17 7h6v6M6 17v5h6" fill="none" stroke={G} strokeWidth="2" />,
  /* design nav */
  plan: <><circle cx="20" cy="17" r="15" fill="#dcecf8" stroke="#5f80a8" strokeWidth="2" /><path d="M10 7 30 27M30 7 10 27" stroke="#7d97b5" strokeWidth="3" /><path d="m18 32 19-22 7 5-1 5-20 20h-6z" fill="#405577" /></>,
  system: <path d="M10 7h14v9H10zM10 22h14v9H10zM30 22h14v9H30zM10 11H5v15h5M24 26h6M0 18h5" fill="#eef6fd" stroke="#3b4c68" strokeWidth="2" />,
  calcNav: <><path d="M2 4h12v4h-3v24h3v4H2v-4h3V8H2z" fill="#3b4c68" /><text x="26" y="18" fontFamily="Roboto" fontSize="19" fill="#4a5b78">H</text><text x="17" y="37" fontFamily="Roboto" fontSize="19" fill="#7d8aa0">CH</text></>,
  house: <><path d="M2 18 20 2l17 16h-4v19H6V18z" fill="#e6f3fc" stroke="#3b4c68" strokeWidth="2" /><path d="M17 37V23h8v14" fill="none" stroke="#3b4c68" strokeWidth="2" />{navPencil}</>,
  manage: <><path d="m1 12 12-6 10 30-10 3z" fill="#dbe6f0" stroke="#98a7b8" strokeWidth="2" /><path d="M12 3h14l16 12-14 10-10-6z" fill="#bfe3f8" stroke="#7a8798" strokeWidth="2" /><circle cx="31" cy="24" r="12" fill="#dfe9f2" stroke="#7a8798" strokeWidth="2" /><circle cx="31" cy="24" r="5" fill="none" stroke="#7a8798" strokeWidth="2" /></>,
  tools: <><path d="M7 1 34 37H7z" fill="#dde6f2" stroke="#5c6a80" strokeWidth="2" /><path d="M3 12h34v8H3z" fill="#cfe6f6" stroke="#3f5c80" strokeWidth="2" />{navPencil}</>,
  library: <><path d="M7 2h31v32H7z" fill="#e3f3fb" stroke="#3b4c68" strokeWidth="2" /><path d="m20 39 23-27v27z" fill="#e3f3fb" stroke="#3b4c68" strokeWidth="2" /><circle cx="12" cy="28" r="11" fill="#e9f6fc" stroke="#3b4c68" strokeWidth="2" /></>,
  help: <><path d="m18 36 15-16c-2-8 4-11 9-8l-5 5 4 3 4-3c0 7-5 9-9 7L23 40z" fill="#d98a3c" stroke="#7c4a1b" /><circle cx="16" cy="16" r="14" fill="#e6f3fb" stroke="#3b4c68" strokeWidth="2" /><text x="16" y="25" textAnchor="middle" fontFamily="Open Sans" fontWeight="700" fontSize="24" fill="#3f5c80">?</text></>,
}

function Icon({ name, size = 28, w, h, box }) {
  return (
    <svg width={w || size} height={h || size} viewBox={box || `0 0 ${w || size} ${h || size}`} aria-hidden="true">
      {icons[name]}
    </svg>
  )
}

function Caret({ small, color = '#567db1' }) {
  return (
    <svg width={small ? 10 : 18} height={small ? 8 : 12} viewBox="0 0 18 12" preserveAspectRatio="none" aria-hidden="true">
      <path d="M0 0h18L9 11z" fill={color} />
    </svg>
  )
}

/* ---------- data ---------- */

const menus = [
  ['文件', 'F'], ['编辑', 'E'], ['视图', 'V'], ['插入', 'I'], ['格式', 'O'], ['工具', 'T'], ['绘图', 'D'], ['文字', 'X'],
  ['标注', 'N'], ['修改', 'M'], ['窗口', 'W'], ['应用软件', 'A'], ['帮助', 'H'], ['扩展工具', 'S'], ['项目', 'P'], ['云批注', 'C'],
]
const tabs = ['常用', '插入', '注释', '三维', '曲面', '网格', '布局', '视图', '管理', '输出', 'BIM', '应用软件', '帮助', '扩展工具', '项目', '云批注']
const sections = ['强电平面', '弱电平面', '折线防雷', '滚球防雷', '接地设计', '三维桥架', '变配电室']
const toolGroups = [
  [['tray', '绘制桥架'], [null, '电\u2002缆\u2002沟', true], [null, '电\u2002气\u2002柜', true]],
  [['transformer', '绘变压器'], ['section', '电室平剖'], ['trenchCut', '地沟剖面'], ['roomCut', '电室剖面']],
  [['hatchFill', '剖面填充'], ['bold', '剖面加粗']],
  [[null, '电缆沟基线'], ['fillOff', '填\u2002充\u2002关'], ['boldOff', '加\u2002粗\u2002关'], ['lamp', '联\u2002动\u2002开']],
]
const popupItems = [['baseline', '基线设置'], ['trench', '绘电缆沟'], ['trenchEdit', '改电缆沟'], ['trenchJoin', '连电缆沟'], ['trenchFill', '沟体填充']]
const designNav = [
  ['plan', '平面设计'], ['system', '系统设计'], ['calcNav', '计　　算'], ['house', '建筑设计'],
  ['manage', '工程管理'], ['tools', '通用工具'], ['library', '图　　库'], ['help', '设置帮助'],
]
const layerIcons = [
  'layBulb', 'laySun', 'layUnlock', 'layNext', 'layTop', 'layList', 'layGear',
  'layOff', 'layFreeze', 'layLock', 'layPrev', 'layMatch', 'layWalk', 'layBack',
]
const history = ['请选取下一点[回退(U)]<取消>:', '请选取下一点[回退(U)]<取消>:', '电缆沟起点<退出>:*取消*', '命令:*取消*', '命令:*取消*']
const statusLeft = ['snap', 'grid', 'dyn', 'ortho', 'polar', 'osnap', 'otrack', 'lwt', 'transp', 'cycle', 'lines', 'pick', 'layFast', 'order']
const pressed = ['dyn', 'osnap', 'otrack', 'transp', 'cycle', 'order', 'ductOn', 'frame']

/* ---------- pieces ---------- */

function Big({ icon, label, label2, arrow, size = 64 }) {
  return (
    <BigButton>
      <BigIcon><Icon name={icon} w={size} h={size} box="0 0 64 64" /></BigIcon>
      <span>{label}</span>
      {label2 && <span>{label2}</span>}
      {arrow && <Caret />}
    </BigButton>
  )
}

function Small({ icon, label, arrow, width }) {
  return (
    <SmallButton $width={width} aria-label={label || icon}>
      <Icon name={icon} />
      {label && <span>{label}</span>}
      {arrow && <Caret />}
    </SmallButton>
  )
}

function Panel({ title, width, arrow, launcher, children }) {
  return (
    <PanelBox $width={width}>
      <PanelBody>{children}</PanelBody>
      <PanelTitle $arrow={arrow}>
        {title}
        {arrow && <Caret />}
        {launcher && <Launcher aria-label={title}><Icon name="launcher" size={16} /></Launcher>}
      </PanelTitle>
    </PanelBox>
  )
}

function Status({ name }) {
  return (
    <StatusButton $on={pressed.includes(name)} aria-label={name}>
      <Icon name={name} />
    </StatusButton>
  )
}

function Popup() {
  return (
    <PopupBox role="menu">
      {popupItems.map(([icon, text]) => (
        <PopupItem key={text} role="menuitem"><Icon name={icon} size={32} />{text}</PopupItem>
      ))}
      <PopupLine />
      <PopupItem role="menuitem" $hot><Icon name="wand" size={32} />分解对象</PopupItem>
      <PopupLine $last />
    </PopupBox>
  )
}

function Drawing() {
  const ticks = []
  for (let i = 0; i < 20; i++) ticks.push(`M${535 + Math.round(i * 40.35)} 521v24`)
  for (let i = 0; i < 8; i++) ticks.push(`M1337 ${190 + Math.round(i * 40.35)}h24`)
  for (let i = 0; i < 13; i++) ticks.push(`M${1402 + Math.round(i * 40.35)} 159v24`)
  return (
    <DrawingSvg width="1960" height="700" viewBox="0 0 1960 700" shapeRendering="crispEdges">
      <path transform="translate(.5 .5)" d={'M495 545H1361V183H1917V151H1329V513H495Z' + ticks.join('')} fill="none" stroke="#0f0" />
      <path d="M251 584 432 533 429 522 466 533 439 555 441 545Z" fill="#ff2a1c" shapeRendering="auto" />
    </DrawingSvg>
  )
}

function ViewCube() {
  return (
    <CubeSvg width="240" height="240" viewBox="0 0 720 720">
      <path d="M315 120H510L482 191H344ZM516 122 657 262 588 293 487 192ZM660 270V463L586 435V300ZM655 472 517 608 487 534 584 441ZM510 612H315L344 537H482ZM308 608 171 472 245 441 340 534ZM165 463V270L243 299V435ZM168 260 308 122 340 192 245 292Z" fill="#6b6b6b" />
      <path d="M328 243H500L537 279V450L500 486H328L291 450V279Z" fill="#fff" />
      <path d="M330 243H495V486H330ZM291 279H537V450H291Z" fill="#c9cbc8" />
      <path d="M330 279H495V450H330Z" fill="#a4a6a3" />
      <g fontFamily="Noto Sans CJK SC" fontWeight="300" fontSize="90" textAnchor="middle" fill="#e2e2e2">
        <text x="415" y="164">北</text>
        <text x="173" y="401">西</text>
        <text x="652" y="401">东</text>
        <text x="413" y="643">南</text>
        <text x="412" y="412" fontSize="118" fill="#757774">上</text>
      </g>
    </CubeSvg>
  )
}

function CommandText({ text }) {
  return text.split(/([\x20-\x7e]+)/).map((part, i) => (i % 2 ? <Ascii key={i}>{part}</Ascii> : part))
}

function App() {
  const [tab, setTab] = useState('常用')

  return (
    <Page>
      <GlobalStyle />
      <TitleBar>
        <AppButton aria-label="GstarCAD">
          <svg width="76" height="76" viewBox="0 0 76 76">
            <defs>
              <linearGradient id="orb" x1="0" y1="0" x2="0" y2="1">
                <stop offset="0" stopColor="#f4f6fa" />
                <stop offset=".48" stopColor="#cfd5e3" />
                <stop offset=".5" stopColor="#b9c2d6" />
                <stop offset="1" stopColor="#fff" />
              </linearGradient>
              <linearGradient id="gee" x1="0" y1="0" x2="1" y2="1">
                <stop offset="0" stopColor="#1fb4f5" />
                <stop offset="1" stopColor="#0b53e8" />
              </linearGradient>
            </defs>
            <circle cx="38" cy="36" r="35" fill="url(#orb)" stroke="#9aa3b5" strokeWidth="2" />
            <path d="M57 20H38C25 21 19 31 20 42 22 52 32 56 42 52 51 48 55 41 56 32H38L35 37H46C43 43 37 46 33 43 28 38 31 28 40 27H55Z" fill="url(#gee)" />
          </svg>
        </AppButton>
        <QuickBar>
          {['newFile', 'open', 'save', 'saveAs', 'print', 'undo'].map(n => <QuickButton key={n} aria-label={n}><Icon name={n} /></QuickButton>)}
          <QuickDrop aria-label="undo list"><Caret small /></QuickDrop>
          <QuickButton aria-label="redo"><Icon name="redo" /></QuickButton>
          <QuickDrop aria-label="redo list"><Caret small color="#8b8f96" /></QuickDrop>
          <QuickButton aria-label="layers"><Icon name="books" w={28} h={31} /></QuickButton>
          <QuickButton aria-label="comment"><Icon name="comment" w={28} h={31} /></QuickButton>
          <Workspace>
            <select aria-label="工作空间"><option>二维草图</option></select>
            <Caret small />
          </Workspace>
        </QuickBar>
        <MoreButton aria-label="more">
          <svg width="12" height="16" viewBox="0 0 12 16"><path d="M0 1h12M0 5h12" stroke="#15428b" strokeWidth="2" /><path d="M0 8h12l-6 6z" fill="#15428b" /></svg>
        </MoreButton>
        <Title>浩辰CAD电力2024 - [Drawing1.dwg]</Title>
        <WinButton aria-label="minimize"><svg width="20" height="20"><path d="M0 10h20" stroke="#000" strokeWidth="2" /></svg></WinButton>
        <WinButton aria-label="restore"><svg width="20" height="20"><path d="M1 6h14v13H1zM5 5V1h14v14h-3" fill="none" stroke="#000" strokeWidth="2" /></svg></WinButton>
        <WinButton aria-label="close"><svg width="20" height="20"><path d="m1 1 18 18M19 1 1 19" stroke="#000" strokeWidth="2" /></svg></WinButton>
      </TitleBar>

      <MenuBar>
        {menus.map(([text, key]) => <a key={text} href="#">{text}(<u>{key}</u>)</a>)}
      </MenuBar>

      <TabBar>
        {tabs.map(t => <RibbonTab key={t} $active={t === tab} onClick={() => setTab(t)}>{t}</RibbonTab>)}
        <TabTools>
          <LookButton>外观<Caret small /></LookButton>
          <button aria-label="min"><svg width="16" height="22"><path d="M0 17h16" stroke="#6b6f78" strokeWidth="4" /><path d="M0 20h16" stroke="#fff" strokeWidth="2" /></svg></button>
          <button aria-label="restore"><svg width="20" height="22"><path d="M2 8h13v10H2zM5 6V3h13v11h-3" fill="none" stroke="#8497b8" strokeWidth="3" /><path d="M4 3h15M1 8h14" stroke="#666" strokeWidth="3" /></svg></button>
          <button aria-label="close"><svg width="22" height="22"><path d="M3 2 19 19M19 2 3 19" stroke="#7286a8" strokeWidth="5" /><path d="M0 21h8M14 21h8" stroke="#fff" strokeWidth="2" /></svg></button>
        </TabTools>
      </TabBar>

      <Ribbon>
        <Panel title="绘图" width={374} arrow>
          <Big icon="line" label="直线" size={58} />
          <Big icon="polyline" label="多段线" size={58} arrow />
          <Big icon="circle" label="圆" size={58} arrow />
          <Big icon="arc" label="圆弧" size={58} arrow />
          <Column>
            <Small icon="points" arrow />
            <Small icon="ellipse" arrow />
            <Small icon="hatch" arrow />
          </Column>
        </Panel>
        <Panel title="修改" width={404} arrow>
          <ModifyGrid>
            <Small icon="erase" label="删除" /><Small icon="explode" label="分解" /><Small icon="boolean" label="布尔" /><Small icon="array" arrow /><Small icon="align" arrow />
            <Small icon="offset" label="偏移" /><Small icon="stretch" label="拉伸" /><Small icon="mirror" label="镜像" /><Small icon="fillet" arrow /><Small icon="breakAt" arrow />
            <Small icon="move" label="移动" /><Small icon="rotate" label="旋转" /><Small icon="copy" label="复制" /><Small icon="trim" arrow /><Small icon="scale" arrow />
          </ModifyGrid>
        </Panel>
        <Panel title="注释" width={191} arrow>
          <Big icon="letter" label="文字" arrow />
          <Column>
            <Small icon="table" label="表格" />
            <Small icon="leader" label="引线" arrow />
            <Small icon="linear" label="线性" arrow />
          </Column>
        </Panel>
        <Panel title="图层" width={522} arrow>
          <Big icon="layerBig" label="图层" label2="特性" />
          <LayerColumn>
            <LayerGrid>
              {layerIcons.map(n => <button key={n} aria-label={n}><Icon name={n} size={32} /></button>)}
            </LayerGrid>
            <Combo>
              <Icon name="bulb" /><Icon name="sun" /><Icon name="unlock" /><Swatch />
              <select aria-label="图层"><option>0</option></select>
              <Caret small />
            </Combo>
          </LayerColumn>
        </Panel>
        <Panel title="块" width={200} arrow>
          <Big icon="insertBlock" label="插入" />
          <Column>
            <Small icon="attach" width={38} />
            <Small icon="block" width={38} />
            <Small icon="blockEdit" width={38} />
          </Column>
          <Big icon="qr" label="二维码" arrow />
        </Panel>
        <Panel title="特性" width={461} arrow launcher>
          <Big icon="matchBig" label="特性" label2="匹配" />
          <Column>
            <Small icon="lineWeight" />
            <Small icon="lineType" />
            <Small icon="palette" />
          </Column>
          <ComboColumn>
            <Combo>
              <LineSample $inset={0} />
              <select aria-label="线宽"><option>ByLayer</option></select>
              <Caret small />
            </Combo>
            <Combo>
              <LineSample $inset={7} />
              <select aria-label="线型"><option>BYLAYER</option></select>
              <Caret small />
            </Combo>
            <Combo>
              <Swatch />
              <select aria-label="颜色"><option>ByLayer</option></select>
              <Caret small />
            </Combo>
          </ComboColumn>
        </Panel>
        <Panel title="组" width={121} arrow>
          <Big icon="groupBig" label="组" />
          <Column>
            <Small icon="ungroup" />
            <Small icon="groupEdit" />
            <Small icon="groupPick" />
          </Column>
        </Panel>
        <Panel title="实用工具" width={181}>
          <Big icon="measure" label="查询" arrow />
          <Column>
            <Small icon="axes" width={40} />
            <Small icon="calc" width={40} />
            <Small icon="dist" width={40} />
          </Column>
          <Column>
            <Small icon="docs" arrow />
            <Small icon="windows" arrow />
            <Small icon="quickPick" arrow />
          </Column>
        </Panel>
        <Panel title="剪贴板" width={121}>
          <Big icon="pasteBig" label="粘贴" arrow />
          <Column>
            <Small icon="docArrow" />
            <Small icon="cut" />
            <Small icon="copyDoc" />
          </Column>
        </Panel>
      </Ribbon>

      <Main>
        <Sidebar>
          <SideHeader>浩辰电力</SideHeader>
          <SideList>
            {sections.map((s, i) => (
              <SectionButton key={s} $open={i === 6}>
                {s}
                <SectionArrow $up={i === 6} />
              </SectionButton>
            ))}
            <ToolList>
              {toolGroups.map((group, i) => (
                <ToolGroup key={i}>
                  {group.map(([icon, text, sub], k) => (
                    <ToolItem key={text}>
                      <ToolButton>
                        <ToolIcon>{icon && <Icon name={icon} size={32} />}</ToolIcon>
                        {text}
                        {sub && <SubArrow />}
                      </ToolButton>
                      {i === 0 && k === 1 && <Popup />}
                    </ToolItem>
                  ))}
                </ToolGroup>
              ))}
            </ToolList>
            <SectionButton>室外变电<SectionArrow /></SectionButton>
            <SectionButton>文　　字<SectionArrow /></SectionButton>
            <DesignNav>
              {designNav.map(([icon, text], i) => (
                <DesignButton key={text} $active={i === 0}>
                  <Icon name={icon} w={46} h={40} />
                  {text}
                </DesignButton>
              ))}
            </DesignNav>
          </SideList>
        </Sidebar>

        <Work>
          <DocTabs>
            <DocTab>
              Drawing1
              <button aria-label="close Drawing1"><svg width="16" height="16"><path d="m2 2 12 12M14 2 2 14" stroke="#d4d0c8" strokeWidth="5" /></svg></button>
            </DocTab>
          </DocTabs>
          <Canvas>
            <Drawing />
            <ViewCube />
            <UcsSvg width="200" height="180" viewBox="0 0 200 180" shapeRendering="crispEdges">
              <path transform="translate(.5 .5)" d="M22 0 34 12 47 0M34 12V25" fill="none" stroke="#fff" />
              <path transform="translate(.5 .5)" d="M22 39V149H133M13 139H33V159H13ZM147 125 172 150M172 125 147 150" fill="none" stroke="#fff" />
            </UcsSvg>
          </Canvas>
          <LayoutTabs>
            <ModelTab>模型</ModelTab>
            <LayoutTab>
              布局1
              <svg width="14" height="33"><path d="M0 33 14 0" stroke="#8fa3c5" /></svg>
            </LayoutTab>
            <LayoutTab aria-label="新建布局">
              +
              <svg width="17" height="33"><path d="M0 33 17 0" stroke="#8fa3c5" /></svg>
            </LayoutTab>
          </LayoutTabs>
          <CommandPane>
            <CommandSide>
              <Grip />
              <button aria-label="close"><Icon name="close" /></button>
              <button aria-label="edit"><Icon name="edit" /></button>
            </CommandSide>
            <CommandBox>
              <HistoryRow>
                <History>
                  {history.map((line, i) => <div key={i}><CommandText text={line} /></div>)}
                </History>
                <VScroll>
                  <svg width="14" height="10"><path d="m1 9 6-6 6 6" fill="none" stroke="#555" strokeWidth="3" /></svg>
                  <VThumb />
                  <svg width="14" height="10"><path d="m1 1 6 6 6-6" fill="none" stroke="#555" strokeWidth="3" /></svg>
                </VScroll>
              </HistoryRow>
              <PromptRow>
                <label htmlFor="cmd"><CommandText text="命令:" /></label>
                <input id="cmd" />
                <HScroll>
                  <svg width="10" height="14"><path d="M9 1 3 7l6 6" fill="none" stroke="#555" strokeWidth="3" /></svg>
                  <HThumb />
                  <svg width="10" height="14"><path d="m1 1 6 6-6 6" fill="none" stroke="#555" strokeWidth="3" /></svg>
                </HScroll>
              </PromptRow>
            </CommandBox>
          </CommandPane>
        </Work>
      </Main>

      <StatusBar>
        <StatusText>
          <ScaleButton>比例 1:100<Caret small color="#7f9fce" /></ScaleButton>
          <span>单位:mm</span>
          <Coords>14629.30, 16984.88, 0.00</Coords>
        </StatusText>
        <StatusTools>
          {statusLeft.map(n => <Status key={n} name={n} />)}
          <Status name="scaleFig" />
          <RatioButton>1:1<Caret small /></RatioButton>
          <Status name="scaleBulb" />
          <Status name="scaleAuto" />
          <Status name="cells" />
        </StatusTools>
        <StatusDuct>
          <Status name="ductOn" /><Status name="ductHatch" /><Status name="ductPlain" /><Status name="frame" />
        </StatusDuct>
        <StatusRight>
          {['gear', 'lockBlue', 'bulbBlue', 'chip', 'alert', 'expand'].map(n => <Status key={n} name={n} />)}
          <span>GstarCAD</span>
        </StatusRight>
      </StatusBar>
    </Page>
  )
}

export default App

/* ---------- frame ---------- */

const Page = styled.div`
  min-height: 100vh;
  display: flex;
  flex-direction: column;
  background: #bfdbff;
  border-bottom: 2px solid #1f3236;
  white-space: nowrap;
`
const TitleBar = styled.header`
  height: 67px;
  display: flex;
  padding-right: 3px;
  background: #fff;
  color: #000;
`
const AppButton = styled.button`
  width: 86px;
  padding-left: 7px;
  position: relative;
  z-index: 2;
`
const QuickBar = styled.div`
  width: 640px;
  height: 65px;
  display: flex;
  align-items: center;
  padding: 0 8px 5px 7px;
  background: linear-gradient(#e8ecf0, #e6ebee);
  border: 1px solid #a9adb5;
  border-top: 0;
  border-radius: 0 0 10px 0;
`
const QuickButton = styled.button`
  width: 38px;
  display: flex;
  justify-content: center;
`
const QuickDrop = styled.button`
  width: 20px;
  display: flex;
  justify-content: center;
`
const Workspace = styled.label`
  flex: 1;
  align-self: stretch;
  display: flex;
  align-items: center;
  padding-right: 6px;
  margin-bottom: -4px;
  background: #e9f1fc;
  border: 1px solid #abc1de;
  border-width: 0 1px;
  select { flex: 1; height: 60px; appearance: none; }
`
const MoreButton = styled.button`
  width: 48px;
  height: 60px;
  display: flex;
  align-items: center;
  justify-content: center;
`
const Title = styled.div`
  flex: 1;
  text-align: center;
  line-height: 60px;
  padding-left: 62px;
`
const WinButton = styled.button`
  width: 92px;
  height: 54px;
  display: flex;
  align-items: center;
  justify-content: center;
`
const MenuBar = styled.nav`
  height: 37px;
  display: flex;
  gap: 25px;
  padding-left: 58px;
  line-height: 38px;
  background: #dde8ed;
  border-bottom: 2px solid #c3c8cf;
`
const TabBar = styled.div`
  height: 38px;
  display: flex;
  padding-right: 8px;
`
const RibbonTab = styled.button`
  height: 38px;
  padding: 0 14px;
  border: 1px solid transparent;
  ${props => props.$active && css`
    border-color: #8db2e3;
    border-bottom: 0;
    border-radius: 5px 5px 0 0;
    background: linear-gradient(#f2f7fd, #dfe9f5);
  `}
`
const TabTools = styled.div`
  margin-left: auto;
  display: flex;
  align-items: center;
  gap: 18px;
`
const LookButton = styled.button`
  display: flex;
  align-items: center;
  gap: 2px;
`

/* ---------- ribbon ---------- */

const Ribbon = styled.section`
  display: flex;
  gap: 5px;
  padding: 3px 2px;
  margin: 0 2px 2px;
  border: 1px solid #8db2e3;
  border-radius: 4px;
  background: linear-gradient(#dde7f3 0, #d3e0f1 20px, #c7d6ed 20px, #d3e3f2 140px, #e2f6ff);
  box-shadow: 0 1px 0 #9dbce8;
`
const PanelBox = styled.div`
  width: ${props => props.$width}px;
  flex: none;
  display: flex;
  flex-direction: column;
  border: 1px solid #a3c0e0;
  border-radius: 4px;
  background: linear-gradient(#dce7f4 0, #cfddef 16px, #c8d8ee 16px, #d6e6f4 139px);
  overflow: hidden;
`
const PanelBody = styled.div`
  height: 138px;
  display: flex;
`
const PanelTitle = styled.div`
  height: 32px;
  display: flex;
  align-items: center;
  justify-content: center;
  gap: 7px;
  position: relative;
  padding-left: ${props => (props.$arrow ? 25 : 0)}px;
  background: #c1d7ef;
  color: #3e6aaa;
`
const Launcher = styled.button`
  position: absolute;
  right: 6px;
  top: 8px;
`
const BigButton = styled.button`
  width: 78px;
  height: 138px;
  display: flex;
  flex-direction: column;
  align-items: center;
  line-height: 30px;
  > svg { margin-top: 10px; }
`
const BigIcon = styled.div`
  height: 77px;
  padding-top: 4px;
`
const Column = styled.div`
  display: flex;
  flex-direction: column;
`
const SmallButton = styled.button`
  height: 38px;
  width: ${props => (props.$width ? props.$width + 'px' : 'auto')};
  display: flex;
  align-items: center;
  gap: 4px;
  padding-left: 4px;
  svg + svg { margin-left: 4px; }
`
const ModifyGrid = styled.div`
  display: grid;
  grid-template-columns: 91px 92px 92px 64px 60px;
  grid-auto-rows: 38px;
  padding-left: 3px;
`
const LayerColumn = styled.div`
  flex: 1;
  padding-right: 2px;
`
const LayerGrid = styled.div`
  display: grid;
  grid-template-columns: repeat(7, 40px);
  grid-auto-rows: 38px;
  padding-left: 3px;
  button { padding-top: 4px; }
`
const Combo = styled.label`
  height: 38px;
  display: flex;
  align-items: center;
  gap: 4px;
  padding: 0 6px 0 4px;
  background: #eaf2fb;
  border: 1px solid #abc1de;
  color: #000;
  font-size: 22px;
  select { flex: 1; height: 34px; appearance: none; }
`
const ComboColumn = styled.div`
  flex: 1;
  padding: 0 3px 0 4px;
`
const Swatch = styled.span`
  width: 28px;
  height: 28px;
  background: #fff;
  border: 1px solid #000;
`
const LineSample = styled.span`
  width: ${props => 160 - props.$inset * 2}px;
  margin: 0 ${props => 5 + props.$inset}px 0 ${props => props.$inset}px;
  border-top: 1px solid #000;
`

/* ---------- sidebar ---------- */

const Main = styled.main`
  flex: 1;
  display: flex;
  gap: 8px;
  padding-left: 8px;
`
const Sidebar = styled.aside`
  width: 240px;
  flex: none;
  background: #fff;
  color: #111;
  font-family: ${SONG};
  font-weight: 300;
`
const SideHeader = styled.div`
  height: 51px;
  padding-left: 16px;
  line-height: 48px;
  background: #b8cfe8;
  border-bottom: 6px solid #d5e4f2;
  color: #3060ad;
  &::before {
    content: '';
    display: inline-block;
    height: 26px;
    margin: 0 5px -6px -8px;
    border-left: 3px dotted #7c93b4;
  }
`
const SideList = styled.div`
  padding: 0 3px;
`
const SectionButton = styled.button`
  width: 100%;
  height: 39px;
  display: flex;
  align-items: center;
  justify-content: space-between;
  padding: 0 14px 3px 40px;
  border: 1px solid #b6bac2;
  border-bottom: 0;
  background: linear-gradient(90deg, #dce9ff, #d8e8ff 60%, #cfe2fc);
  color: ${props => (props.$open ? '#000' : 'inherit')};
`
const SectionArrow = styled.span`
  margin-top: 4px;
  border: 5px solid transparent;
  border-top: 6px solid #4d4f53;
  border-bottom: 0;
  transform: ${props => (props.$up ? 'rotate(180deg)' : 'none')};
`
const ToolList = styled.div`
  border-top: 1px solid #b6bac2;
  padding-top: 1px;
`
const ToolGroup = styled.div`
  & + & { border-top: 1px solid #5fbcec; padding-top: 2px; }
`
const ToolItem = styled.div`
  position: relative;
`
const ToolButton = styled.button`
  width: 100%;
  height: 40px;
  display: flex;
  align-items: center;
  padding: 0 16px 4px 4px;
`
const ToolIcon = styled.span`
  width: 37px;
  padding-top: 2px;
`
const SubArrow = styled.span`
  margin-left: auto;
  border: 5px solid transparent;
  border-left: 6px solid #4d4f53;
  border-right: 0;
`
const DesignNav = styled.nav`
  border: 1px solid #b6bac2;
  padding-top: 2px;
  background: #dce9ff;
`
const DesignButton = styled.button`
  width: 100%;
  height: 51px;
  display: flex;
  align-items: center;
  gap: 9px;
  padding: 0 0 3px 9px;
  border-top: 1px solid #b0b8c4;
  background: ${props => props.$active
    ? 'linear-gradient(#ffd09a 0, #ffbb6e 40%, #ffa63d 42%, #ffd970 100%)'
    : 'linear-gradient(#e3eeff 0, #c6defe 45%, #aacdfb 50%, #c4defe 100%)'};
  svg { margin-top: 4px; }
`
const PopupBox = styled.div`
  position: absolute;
  left: 100%;
  top: -1px;
  z-index: 5;
  width: 234px;
  padding: 3px 2px 4px;
  border: 1px solid #8c8c8c;
  background: linear-gradient(90deg, #f0f0f0 2px, #bddaff 2px, #e3efff 52px, #868686 52px, #868686 53px, #fff 53px);
  box-shadow: 4px 4px 4px rgba(0, 0, 0, 0.5);
  color: #000;
  font-family: ${UI};
  font-weight: 400;
`
const PopupItem = styled.button`
  width: 100%;
  height: 44px;
  display: flex;
  align-items: center;
  gap: 34px;
  padding: 0 0 4px 6px;
  svg { margin-top: 12px; }
  ${props => props.$hot && css`
    background: linear-gradient(#fffbe0 0, #ffe490 44%, #ffd050 50%, #ffe08a 75%, #fff3c4 100%);
    svg { margin: 0 3px 0 -3px; }
  `}
`
const PopupLine = styled.div`
  margin: ${props => (props.$last ? '0 0 0 52px' : '-1px 0 3px 52px')};
  border-top: 1px solid #5fbcec;
`

/* ---------- work area ---------- */

const Work = styled.div`
  flex: 1;
  min-width: 0;
  display: flex;
  flex-direction: column;
  padding-bottom: 8px;
`
const DocTabs = styled.div`
  height: 32px;
  background: #f0f0f0;
  border-bottom: 1px solid #777;
`
const DocTab = styled.div`
  width: 201px;
  height: 31px;
  display: flex;
  align-items: center;
  justify-content: space-between;
  padding: 8px 14px 0 46px;
  clip-path: polygon(0 100%, 30px 0, 100% 0, 100% 100%);
  background: linear-gradient(#fff0cc 0, #ffc864 50%, #ffd98e 72%, #fff6e0 78%, #ffe7b5 100%);
  color: #222;
  font-family: ${SONG};
  font-size: 20px;
  line-height: 22px;
`
const Canvas = styled.div`
  flex: 1;
  position: relative;
  overflow: hidden;
  background: #212830;
  border-left: 1px solid #777;
`
const DrawingSvg = styled.svg`
  position: absolute;
  left: -1px;
  top: 0;
`
const CubeSvg = styled.svg`
  position: absolute;
  right: 0;
  top: 14px;
`
const UcsSvg = styled.svg`
  position: absolute;
  left: 19px;
  bottom: 9px;
`
const LayoutTabs = styled.div`
  height: 38px;
  display: flex;
  align-items: flex-start;
  padding-left: 78px;
  background: #d5e4f2;
  border-top: 2px solid #6a6d70;
  margin-bottom: 8px;
`
const ModelTab = styled.button`
  width: 79px;
  height: 33px;
  background: #212830;
  clip-path: polygon(0 0, 100% 0, 78% 100%, 22% 100%);
  color: #fff;
  font-weight: 700;
  line-height: 30px;
`
const LayoutTab = styled.button`
  height: 33px;
  display: flex;
  align-items: center;
  color: #000;
  line-height: 30px;
  margin-left: -4px;
  border-bottom: 1px solid #8fa3c5;
`
const CommandPane = styled.div`
  height: 182px;
  display: flex;
`
const CommandSide = styled.div`
  width: 45px;
  display: flex;
  flex-direction: column;
  align-items: center;
  gap: 9px;
  padding-top: 2px;
  background: #b8cfe8;
`
const Grip = styled.div`
  width: 27px;
  height: 4px;
  border: 2px dotted #8294ad;
  border-width: 2px 0;
`
const CommandBox = styled.div`
  flex: 1;
  display: flex;
  flex-direction: column;
  border: 2px solid #6d6d6d;
  border-right: 3px solid #dce7f3;
  border-bottom-color: #e8e8e8;
  background: #fff;
  color: #111;
  font-family: ${SONG};
  font-size: 28px;
  font-weight: 300;
`
const HistoryRow = styled.div`
  height: 142px;
  display: flex;
`
const History = styled.div`
  flex: 1;
  display: flex;
  flex-direction: column;
  justify-content: flex-end;
  overflow: hidden;
  padding-left: 4px;
  div { height: 34px; line-height: 38px; flex: none; }
`
const Ascii = styled.span`
  font-size: 24px;
`
const VScroll = styled.div`
  width: 32px;
  display: flex;
  flex-direction: column;
  align-items: center;
  justify-content: space-between;
  padding: 13px 0 11px;
  background: #f0f0f0;
`
const VThumb = styled.div`
  width: 32px;
  height: 34px;
  margin-top: 42px;
  background: #cdcdcd;
`
const PromptRow = styled.div`
  flex: 1;
  display: flex;
  align-items: center;
  padding: 0 34px 0 4px;
  border-top: 1px solid #6d6d6d;
  line-height: 38px;
  input { flex: 1; height: 32px; outline: 0; }
`
const HScroll = styled.div`
  width: 160px;
  height: 33px;
  display: flex;
  align-items: center;
  padding: 0 12px;
  background: #f0f0f0;
  svg:last-child { margin-left: auto; }
`
const HThumb = styled.div`
  width: 34px;
  height: 33px;
  margin-left: 12px;
  background: #cdcdcd;
`

/* ---------- status bar ---------- */

const StatusBar = styled.footer`
  height: 48px;
  display: flex;
  align-items: stretch;
  border-top: 1px solid #567db1;
  background: linear-gradient(#e3ecfa 0, #c6dbf7 8px, #b0cdf3 9px, #cfe0f8 100%);
  font-size: 22px;
`
const StatusText = styled.div`
  width: 915px;
  display: flex;
  align-items: center;
  gap: 8px;
  padding: 0 0 2px 4px;
`
const ScaleButton = styled.button`
  display: flex;
  align-items: center;
  gap: 5px;
`
const RatioButton = styled(ScaleButton)`
  padding: 0 4px;
`
const Coords = styled.span`
  margin-left: 4px;
  font-size: 21px;
`
const StatusTools = styled.div`
  flex: 1;
  display: flex;
  align-items: center;
`
const StatusButton = styled.button`
  width: 36px;
  height: 42px;
  margin: 0 1px;
  display: flex;
  align-items: center;
  justify-content: center;
  border: 1px solid transparent;
  border-radius: 3px;
  ${props => props.$on && css`
    border-color: #cdbb8a;
    background: linear-gradient(#fffbe6 0, #ffeeb0 46%, #ffdb68 50%, #fff0a8 100%);
  `}
`
const StatusDuct = styled.div`
  display: flex;
  align-items: center;
  padding-right: 14px;
`
const StatusRight = styled.div`
  display: flex;
  align-items: center;
  padding: 0 3px 0 5px;
  border-left: 2px solid #567db1;
  background: linear-gradient(#b5cdf0 0, #9bbbea 8px, #8fb3e6 9px, #7fa2d4 100%);
  span { margin-left: 4px; }
`
